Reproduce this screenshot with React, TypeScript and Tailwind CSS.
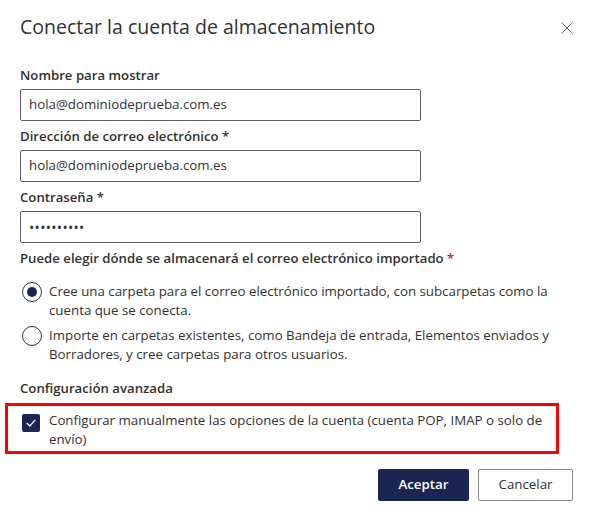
import React from "react";

const font = { fontFamily: '"Segoe UI", "Open Sans", "Noto Sans", sans-serif' };

function Field({ label, required, value, password }: { label: string; required?: boolean; value: string; password?: boolean }) {
  return (
    <div className="flex flex-col">
      <div className="h-[20px] text-[13.2px] leading-[20px] font-semibold text-[#323130] whitespace-nowrap">
        {label}
        {required && <span className="text-[#323130]"> *</span>}
      </div>
      <div className="mt-[4px] h-[32px] w-[401px] border border-[#605e5c] rounded-[2px] flex items-center px-[8px] text-[13.3px] text-[#323130]">
        {password ? <span className="tracking-[0.3px] text-[14px]">••••••••••</span> : value}
      </div>
    </div>
  );
}

function Radio({ checked, children }: { checked?: boolean; children: React.ReactNode }) {
  return (
    <div className="flex items-start">
      <div className="w-[20px] h-[20px] ml-[2px] rounded-full border border-[#323130] flex items-center justify-center shrink-0">
        {checked && <div className="w-[10px] h-[10px] rounded-full bg-[#1b2551]" />}
      </div>
      <div className="ml-[7px] text-[13.3px] leading-[19px] text-[#323130] whitespace-nowrap">{children}</div>
    </div>
  );
}

export default function App() {
  return (
    <div className="w-[590px] h-[517px] bg-white relative" style={font}>
      <div className="pl-[20px] pr-[17px] pt-[13px]">
        <div className="h-[28px] text-[19.5px] leading-[28px] text-[#323130] whitespace-nowrap">
          Conectar la cuenta de almacenamiento
        </div>
        <div className="mt-[24px] flex flex-col gap-[5px]">
          <Field label="Nombre para mostrar" value="hola@dominiodeprueba.com.es" />
          <Field label="Dirección de correo electrónico" required value="hola@dominiodeprueba.com.es" />
          <Field label="Contraseña" required value="" password />
        </div>
        <div className="mt-[5px] h-[20px] text-[13.2px] leading-[20px] font-semibold text-[#323130] whitespace-nowrap">
          Puede elegir dónde se almacenará el correo electrónico importado
          <span className="text-[#a4262c]"> *</span>
        </div>
        <div className="mt-[14px] flex flex-col gap-[6px]">
          <Radio checked>
            Cree una carpeta para el correo electrónico importado, con subcarpetas como la
            <br />
            cuenta que se conecta.
          </Radio>
          <Radio>
            Importe en carpetas existentes, como Bandeja de entrada, Elementos enviados y
            <br />
            Borradores, y cree carpetas para otros usuarios.
          </Radio>
        </div>
        <div className="mt-[14px] h-[20px] text-[13.2px] leading-[20px] font-semibold text-[#323130] whitespace-nowrap">
          Configuración avanzada
        </div>
      </div>
      <div className="ml-[5px] mt-[5px] w-[554px] h-[51px] border-[3px] border-[#ff0000] flex items-start pt-[5px] pl-[14px]">
        <div className="mt-[3px] w-[18px] h-[18px] rounded-[2px] bg-[#1b2551] flex items-center justify-center shrink-0">
          <svg width="12" height="12" viewBox="0 0 12 12" fill="none">
            <path d="M2 6.3 L4.8 9 L10 3.2" stroke="white" strokeWidth="1.2" strokeLinecap="round" strokeLinejoin="round" />
          </svg>
        </div>
        <div className="ml-[9px] text-[13.3px] leading-[19px] text-[#323130] whitespace-nowrap">
          Configurar manualmente las opciones de la cuenta (cuenta POP, IMAP o solo de
          <br />
          envío)
        </div>
      </div>
      <div className="mt-[15px] pr-[17px] flex justify-end gap-[9px]">
        <button className="h-[32px] w-[91px] rounded-[2px] bg-[#1b2551] text-white text-[13.3px] font-semibold">
          Aceptar
        </button>
        <button className="h-[32px] w-[95px] rounded-[2px] border border-[#8a8886] bg-white text-[#323130] text-[13.3px]">
          Cancelar
        </button>
      </div>
      <svg className="absolute left-[561px] top-[22px]" width="12" height="12" viewBox="0 0 12 12" fill="none">
        <path d="M0.5 0.5 L11.5 11.5 M11.5 0.5 L0.5 11.5" stroke="#605e5c" strokeWidth="1" />
      </svg>
    </div>
  );
}
